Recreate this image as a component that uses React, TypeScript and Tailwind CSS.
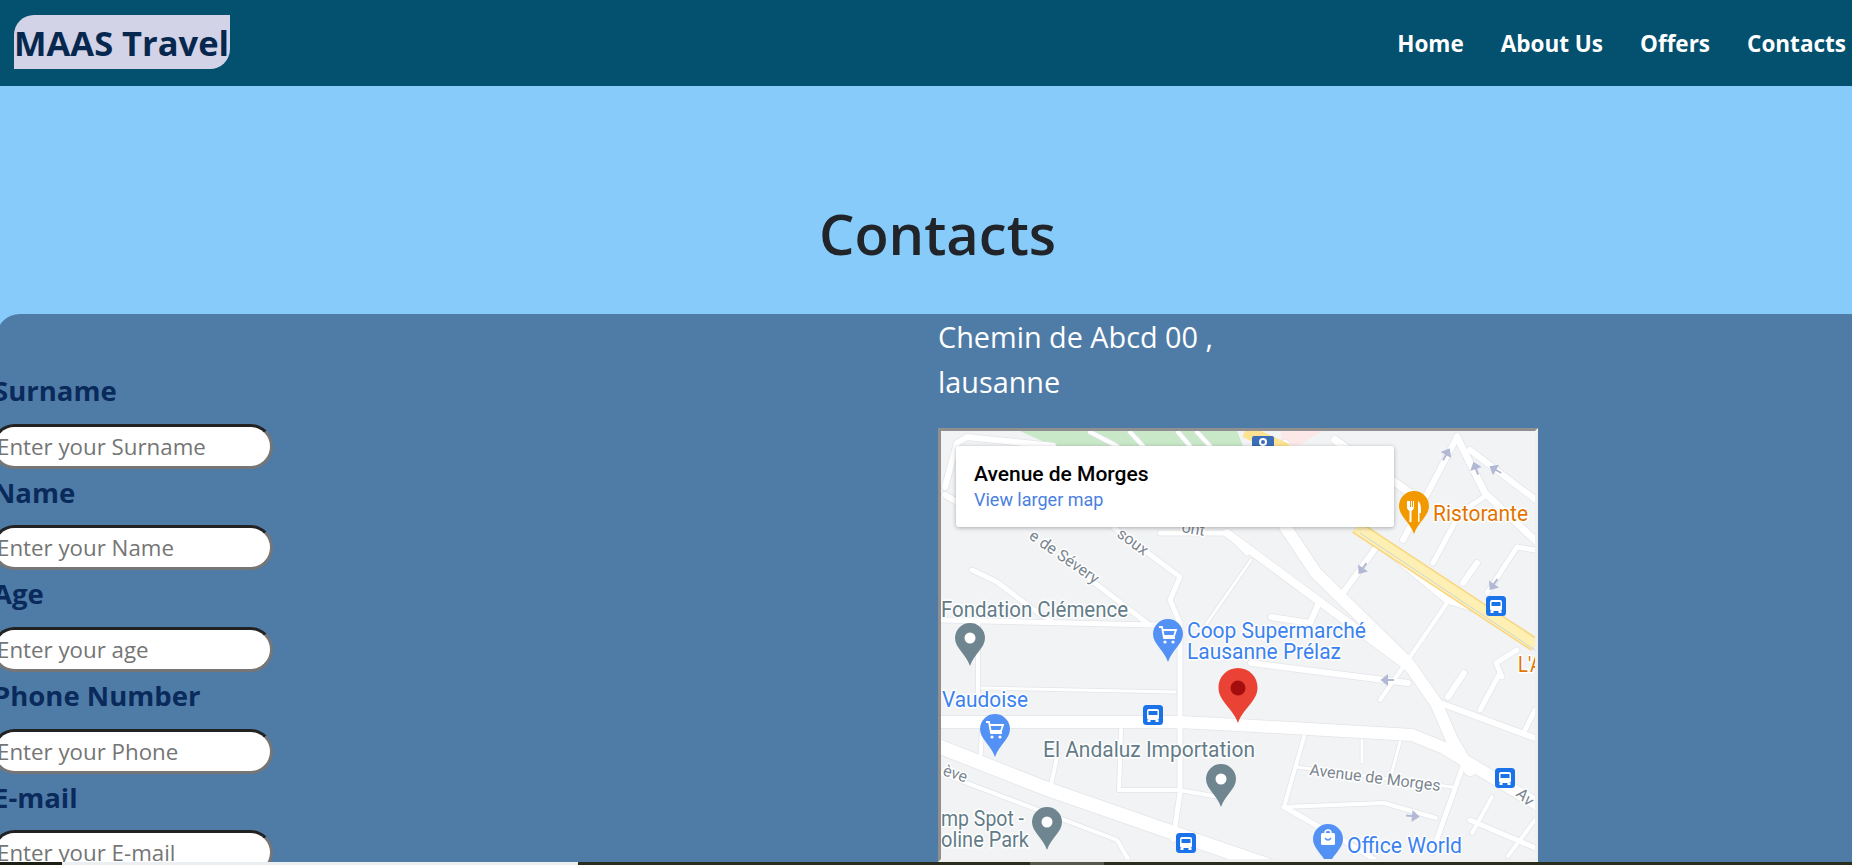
import React from 'react';

const fields = [
  { label: 'Surname', placeholder: 'Enter your Surname' },
  { label: 'Name', placeholder: 'Enter your Name' },
  { label: 'Age', placeholder: 'Enter your age' },
  { label: 'Phone Number', placeholder: 'Enter your Phone' },
  { label: 'E-mail', placeholder: 'Enter your E-mail' },
];

const navLinks = ['Home', 'About Us', 'Offers', 'Contacts'];

// [stroke width, points] in page coordinates
const roads: [number, string][] = [
  [12, '941,722 1179,722 1238,725 1412,735 1444,748 1540,806'],
  [14, '935,745 1050,790 1171,832 1270,866'],
  [12, '1284,525 1316,573 1408,663 1436,703 1452,740 1470,770'],
  [4, '941,773 1117,840 1132,866'],
  [5, '941,620 1153,625 1180,623'],
  [5, '972,570 997,582 1030,607 1052,622'],
  [5, '1087,577 1147,623'],
  [5, '1113,527 1180,577 1170,600 1180,623 1180,793 1173,840'],
  [5, '1160,533 1227,533 1247,553'],
  [8, '1227,533 1408,667'],
  [3, '1251,560 1207,623'],
  [6, '1380,542 1343,593'],
  [6, '1403,540 1457,437'],
  [6, '1470,450 1540,503'],
  [7, '1457,437 1485,493 1540,545'],
  [5, '1487,495 1460,513 1433,563'],
  [5, '1535,550 1517,547 1487,593'],
  [6, '1477,563 1463,583'],
  [7, '1387,550 1447,600 1480,610'],
  [4, '1447,603 1408,660 1380,700'],
  [6, '1464,673 1448,697'],
  [5, '1500,673 1480,710'],
  [5, '1517,650 1496,663 1502,677'],
  [6, '1432,700 1540,740'],
  [5, '1535,710 1525,730'],
  [4, '1304,737 1284,807'],
  [3, '1362,740 1362,762'],
  [3, '1400,742 1392,772'],
  [3, '1296,767 1452,787'],
  [5, '1464,763 1432,853'],
  [4, '1284,807 1384,803 1436,818'],
  [5, '1284,807 1348,843 1385,866'],
  [4, '1492,797 1472,833'],
  [5, '1470,820 1540,850'],
  [4, '1535,820 1508,856'],
  [4, '1119,790 1179,790 1219,797'],
  [4, '1121,730 1119,790'],
  [4, '1050,790 1058,752'],
  [3, '982,688 1175,692'],
  [4, '978,620 978,695'],
  [4, '982,730 980,765'],
  [6, '1251,663 1408,683'],
  [6, '1271,617 1310,623 1320,600'],
  [6, '945,487 957,443 967,437 1053,446'],
  [6, '945,495 975,512'],
  [4, '1090,432 1117,446'],
  [4, '1130,432 1143,446'],
  [4, '1178,432 1190,446'],
  [4, '1197,432 1210,446'],
  [8, '1335,440 1420,500'],
  [10, '1285,445 1240,490'],
];

const busStops = [
  [1496, 606],
  [1153, 715],
  [1186, 843],
  [1505, 778],
];

const arrows: [number, number, number][] = [
  [1446, 455, -60],
  [1476, 469, -110],
  [1496, 470, -150],
  [1363, 568, 125],
  [1494, 584, 125],
  [1388, 680, 180],
  [1412, 816, 5],
];

const teardrop = (x: number, y: number) =>
  `M${x} ${y - 43}a15 15 0 0 1 15 15c0 10-11 16-15 28c-4-12-15-18-15-28a15 15 0 0 1 15-15z`;

const Pin = ({ x, y, fill }: { x: number; y: number; fill: string }) => (
  <g>
    <path d={teardrop(x, y)} fill={fill} />
    <circle cx={x} cy={y - 28} r="5.5" fill="#fff" />
  </g>
);

const CartPin = ({ x, y }: { x: number; y: number }) => (
  <g>
    <path d={teardrop(x, y)} fill="#5491f5" />
    <path
      d={`M${x - 9} ${y - 35}h3l2 11h11M${x - 5} ${y - 32}h13l-2 6h-10`}
      fill="none"
      stroke="#fff"
      strokeWidth="1.8"
    />
    <circle cx={x - 3} cy={y - 20} r="1.6" fill="#fff" />
    <circle cx={x + 5} cy={y - 20} r="1.6" fill="#fff" />
  </g>
);

const Bus = ({ x, y }: { x: number; y: number }) => (
  <g>
    <rect x={x - 10} y={y - 10} width="20" height="20" rx="3.5" fill="#1a73e8" />
    <rect x={x - 6} y={y - 6} width="12" height="11" rx="2" fill="#fff" />
    <rect x={x - 4.5} y={y - 4} width="9" height="4" fill="#1a73e8" />
    <rect x={x - 5.5} y={y + 5} width="3" height="2" fill="#fff" />
    <rect x={x + 2.5} y={y + 5} width="3" height="2" fill="#fff" />
  </g>
);

const labelClass = "font-['Roboto',sans-serif] [paint-order:stroke] stroke-white [stroke-width:3px] [stroke-linejoin:round]";

const MapLabel = ({
  x,
  y,
  w,
  fill,
  children,
}: {
  x: number;
  y: number;
  w: number;
  fill: string;
  children: string;
}) => (
  <text x={x} y={y} fill={fill} fontSize="22" textLength={w} lengthAdjust="spacingAndGlyphs" className={labelClass}>
    {children}
  </text>
);

const RoadLabel = ({
  x,
  y,
  angle,
  children,
}: {
  x: number;
  y: number;
  angle: number;
  children: string;
}) => (
  <text x={x} y={y} fontSize="16" fill="#7b8690" transform={`rotate(${angle} ${x} ${y})`} className={labelClass}>
    {children}
  </text>
);

const MapEmbed = () => (
  <div className="relative h-[434px] w-[600px] border-[3px] border-t-[#8f8f8f] border-l-[#8f8f8f] border-r-[#f0f0f0] border-b-[#f0f0f0] bg-[#f1f3f4]">
    <svg viewBox="941 431 594 428" className="block h-full w-full">
      <rect x="941" y="431" width="594" height="428" fill="#f1f3f4" />
      <path d="M1020 431L1053 446H1243L1237 431Z" fill="#c8e8c8" />
      <path d="M1282 431H1322L1296 447H1280Z" fill="#fce8e6" />
      {roads.map(([w, pts], i) => (
        <polyline key={i} points={pts} fill="none" stroke="#e3e5e9" strokeWidth={w + 1.5} strokeLinejoin="round" strokeLinecap="round" />
      ))}
      {roads.map(([w, pts], i) => (
        <polyline key={i} points={pts} fill="none" stroke="#fff" strokeWidth={w} strokeLinejoin="round" strokeLinecap="round" />
      ))}
      <path d="M1245 431L1287 450" stroke="#fde293" strokeWidth="13" />
      <polyline points="1356,527 1535,645" fill="none" stroke="#f8d57e" strokeWidth="14" />
      <polyline points="1356,527 1535,645" fill="none" stroke="#feefb3" strokeWidth="11" />
      <polyline points="1360,533 1535,650" fill="none" stroke="#cfd3d8" strokeWidth="1" />

      {arrows.map(([x, y, a], i) => (
        <path
          key={i}
          d={`M${x - 6} ${y}H${x + 2}M${x + 6} ${y}L${x + 1} ${y - 4}V${y + 4}Z`}
          stroke="#b3b9d4"
          strokeWidth="2"
          fill="#b3b9d4"
          transform={`rotate(${a} ${x} ${y})`}
        />
      ))}

      <RoadLabel x={1028} y={538} angle={35}>e de Sévery</RoadLabel>
      <RoadLabel x={1116} y={536} angle={36}>soux</RoadLabel>
      <RoadLabel x={1181} y={532} angle={10}>ont</RoadLabel>
      <RoadLabel x={1309} y={775} angle={7}>Avenue de Morges</RoadLabel>
      <RoadLabel x={1515} y={795} angle={42}>Av</RoadLabel>
      <RoadLabel x={942} y={775} angle={18}>ève</RoadLabel>

      <Pin x={970} y={666} fill="#6f858f" />
      <Pin x={1221} y={807} fill="#6f858f" />
      <Pin x={1047} y={850} fill="#6f858f" />
      <CartPin x={1168} y={662} />
      <CartPin x={995} y={757} />

      <path d={teardrop(1414, 534)} fill="#f29900" />
      <path d="M1407 501v6q0 3 2.500 4v11h2v-11q2.500-1 2.500-4v-6h-1v6h-1v-6h-1v6h-1v-6zM1418 501q3 2 3 9v3h-1.500v9h-1.500z" fill="#fff" />

      <path d="M1328 824a15 15 0 0 1 15 15c0 10-11 16-15 28c-4-12-15-18-15-28a15 15 0 0 1 15-15z" fill="#5491f5" />
      <rect x="1321" y="833" width="14" height="12" rx="1.500" fill="#fff" />
      <path d="M1325 838q3 4 6 0" fill="none" stroke="#5491f5" strokeWidth="1.500" />
      <path d="M1325 833a3 3 0 0 1 6 0" fill="none" stroke="#fff" strokeWidth="1.500" />

      {busStops.map(([x, y], i) => (
        <Bus key={i} x={x} y={y} />
      ))}
      <rect x="1252" y="436" width="22" height="20" rx="2" fill="#3a6fb8" />
      <circle cx="1263" cy="442" r="3" fill="none" stroke="#fff" strokeWidth="2" />

      <path d="M1238 668c11 0 19.500 8.500 19.500 19.500c0 14-14 20-19.500 35.500c-5.500-15.500-19.500-21.500-19.500-35.500c0-11 8.500-19.500 19.500-19.500z" fill="#ea4335" />
      <circle cx="1238" cy="688" r="7.500" fill="#a50e0e" />

      <MapLabel x={1433} y={521} w={95} fill="#e37400">Ristorante</MapLabel>
      <MapLabel x={1518} y={672} w={24} fill="#e37400">L'A</MapLabel>
      <MapLabel x={941} y={617} w={187} fill="#637c88">Fondation Clémence</MapLabel>
      <MapLabel x={1187} y={638} w={179} fill="#3b82f0">Coop Supermarché</MapLabel>
      <MapLabel x={1187} y={659} w={154} fill="#3b82f0">Lausanne Prélaz</MapLabel>
      <MapLabel x={942} y={707} w={86} fill="#3b82f0">Vaudoise</MapLabel>
      <MapLabel x={1043} y={757} w={212} fill="#637c88">El Andaluz Importation</MapLabel>
      <MapLabel x={941} y={826} w={83} fill="#637c88">mp Spot -</MapLabel>
      <MapLabel x={941} y={847} w={88} fill="#637c88">oline Park</MapLabel>
      <MapLabel x={1347} y={853} w={115} fill="#3b82f0">Office World</MapLabel>
    </svg>

    <div className="absolute left-[15px] top-[15px] h-[81px] w-[438px] rounded-[3px] bg-white pl-[18px] pt-[15px] font-['Roboto',sans-serif] shadow-[0_1px_4px_rgba(0,0,0,0.3)]">
      <div className="text-[21px] font-medium leading-[27px] text-black">Avenue de Morges</div>
      <div className="text-[18px] leading-[24px] text-[#4a7fe0]">View larger map</div>
    </div>
  </div>
);

export default function App() {
  return (
    <div className="relative h-[865px] w-full overflow-hidden bg-[#86cbfa] font-['Open_Sans',sans-serif]">
      <header className="flex h-[86px] items-center justify-between bg-[#03506f] pb-[2px] pl-[14px] pr-[6px]">
        <div className="flex h-[54px] w-[216px] items-center whitespace-nowrap rounded-tl-[20px] rounded-br-[20px] bg-[#d3d3e8] pt-[2px] text-[34.5px] font-bold text-[#06284f]">
          MAAS Travel
        </div>
        <nav className="flex gap-[37px] pt-[4px] text-[22.5px] font-bold text-white">
          {navLinks.map((link) => (
            <a key={link}>{link}</a>
          ))}
        </nav>
      </header>

      <section className="flex h-[228px] items-center justify-center pl-[23px] pt-[66px]">
        <h1 className="text-[56px] font-semibold text-[#212529]">Contacts</h1>
      </section>

      <main className="-ml-[4px] grid grid-cols-2 rounded-tl-[24px] bg-[#4f7ca6] pb-[40px]">
        <form className="pt-[53px]">
          {fields.map((field) => (
            <div key={field.label} className="h-[101.67px]">
              <label className="-ml-[3px] block h-[56.67px] whitespace-nowrap text-[27.5px] font-bold leading-[48px] text-[#0a2a5c]">
                {field.label}
              </label>
              <input
                placeholder={field.placeholder}
                className="-ml-[4px] box-border h-[45px] w-[281px] rounded-full border-[3px] border-t-[#222] border-l-[#222] border-r-[#767676] border-b-[#767676] bg-white px-[2px] text-[22.3px] outline-none placeholder:text-[#757575]"
              />
            </div>
          ))}
        </form>
        <div className="pl-[14px]">
          <p className="text-[28.8px] leading-[45px] text-white">
            Chemin de Abcd 00 ,
            <br />
            lausanne
          </p>
          <div className="mt-[24px]">
            <MapEmbed />
          </div>
        </div>
      </main>

      <div className="absolute bottom-0 left-0 flex h-[3px] w-full">
        <div className="w-[62px] bg-[#1c1f14]" />
        <div className="w-[516px] bg-[#eceff1]" />
        <div className="w-[452px] bg-[#2a2d1c]" />
        <div className="w-[74px] bg-[#57584c]" />
        <div className="flex-1 bg-[#2a2d1c]" />
      </div>
    </div>
  );
}
